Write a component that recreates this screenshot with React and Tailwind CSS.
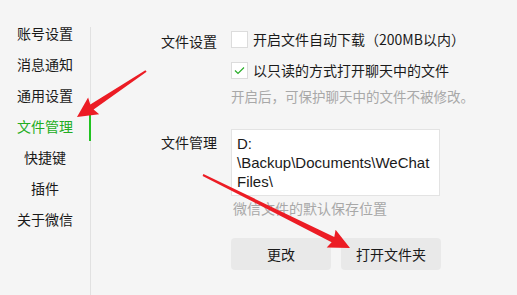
import React from "react";

const CJK = { fontFamily: '"Noto Sans CJK SC", "Noto Sans", sans-serif' };

function arrowPoints(tx, ty, px, py, tailW, shaftW, headLen, headW) {
  const dx = px - tx, dy = py - ty;
  const L = Math.hypot(dx, dy);
  const ux = dx / L, uy = dy / L;
  const nx = -uy, ny = ux;
  const bx = px - ux * headLen, by = py - uy * headLen;
  const pts = [
    [tx + nx * tailW / 2, ty + ny * tailW / 2],
    [bx + nx * shaftW / 2, by + ny * shaftW / 2],
    [bx + nx * headW / 2 - ux * 2, by + ny * headW / 2 - uy * 2],
    [px, py],
    [bx - nx * headW / 2 - ux * 2, by - ny * headW / 2 - uy * 2],
    [bx - nx * shaftW / 2, by - ny * shaftW / 2],
    [tx - nx * tailW / 2, ty - ny * tailW / 2],
  ];
  return pts.map((p) => p.map((v) => v.toFixed(1)).join(",")).join(" ");
}

const navItems = ["账号设置", "消息通知", "通用设置", "文件管理", "快捷键", "插件", "关于微信"];

function Checkbox({ checked }) {
  return (
    <div className="w-[17px] h-[17px] border border-[#dcdcdc] bg-white flex items-center justify-center shrink-0">
      {checked && (
        <svg width="11" height="9" viewBox="0 0 11 9">
          <path d="M1 4.5 L4 7.5 L10 1.5" fill="none" stroke="#2aae2a" strokeWidth="1.2" />
        </svg>
      )}
    </div>
  );
}

export default function App() {
  return (
    <div className="relative w-[517px] h-[295px] bg-[#f5f5f5] flex overflow-hidden text-[#1a1a1a]" style={CJK}>
      <div className="w-[90px] pt-[18px] flex flex-col">
        {navItems.map((t) => (
          <div
            key={t}
            className={`relative h-[31px] flex items-center justify-center text-[14px] ${
              t === "文件管理" ? "text-[#22ad22]" : "text-[#1a1a1a]"
            }`}
          >
            {t}
            {t === "文件管理" && (
              <div className="absolute right-[-1px] top-[2px] w-[2px] h-[28px] bg-[#22c322]" />
            )}
          </div>
        ))}
      </div>
      <div className="w-px mt-[27px] bg-[#e1e1e1]" />
      <div className="flex-1 pl-[70px] pt-[29px] flex flex-col">
        <div className="flex">
          <div className="w-[70px] shrink-0 text-[14px] leading-[20px] pt-[2px]">文件设置</div>
          <div className="flex flex-col">
            <div className="flex items-center h-[20px] gap-[5px] text-[14px]">
              <Checkbox />
              <span>开启文件自动下载（200MB以内）</span>
            </div>
            <div className="flex items-center h-[20px] gap-[5px] text-[14px] mt-[11px]">
              <Checkbox checked />
              <span>以只读的方式打开聊天中的文件</span>
            </div>
            <div className="mt-[7px] h-[18px] leading-[18px] text-[13.5px] text-[#a8a8a8]">
              开启后，可保护聊天中的文件不被修改。
            </div>
          </div>
        </div>
        <div className="flex mt-[24px]">
          <div className="w-[70px] shrink-0 text-[14px] leading-[20px] pt-[3px]">文件管理</div>
          <div className="flex flex-col">
            <div
              className="w-[209px] h-[67px] bg-white border border-[#e3e3e3] pl-[5px] pt-[4px] text-[15px] leading-[19px] text-[#1a1a1a]"
              style={{ fontFamily: '"Liberation Sans", Arial, sans-serif' }}
            >
              <div>D:</div>
              <div>\Backup\Documents\WeChat</div>
              <div>Files\</div>
            </div>
            <div className="mt-[3px] h-[18px] leading-[18px] text-[14px] text-[#a8a8a8] pl-[2px]">
              微信文件的默认保存位置
            </div>
            <div className="flex gap-[10px] mt-[21px]">
              <button className="w-[100px] h-[32px] rounded-[4px] bg-[#e9e9e9] text-[14px] text-[#1a1a1a]">更改</button>
              <button className="w-[100px] h-[32px] rounded-[4px] bg-[#e9e9e9] text-[14px] text-[#1a1a1a]">打开文件夹</button>
            </div>
          </div>
        </div>
      </div>
      <svg className="absolute inset-0 pointer-events-none" width="517" height="295" viewBox="0 0 517 295">
        <polygon points={arrowPoints(146, 71, 77, 117, 2, 6, 18, 20)} fill="#ec1c24" />
        <polygon points={arrowPoints(203, 175, 350, 248, 2, 6, 19, 20)} fill="#ec1c24" />
      </svg>
    </div>
  );
}
